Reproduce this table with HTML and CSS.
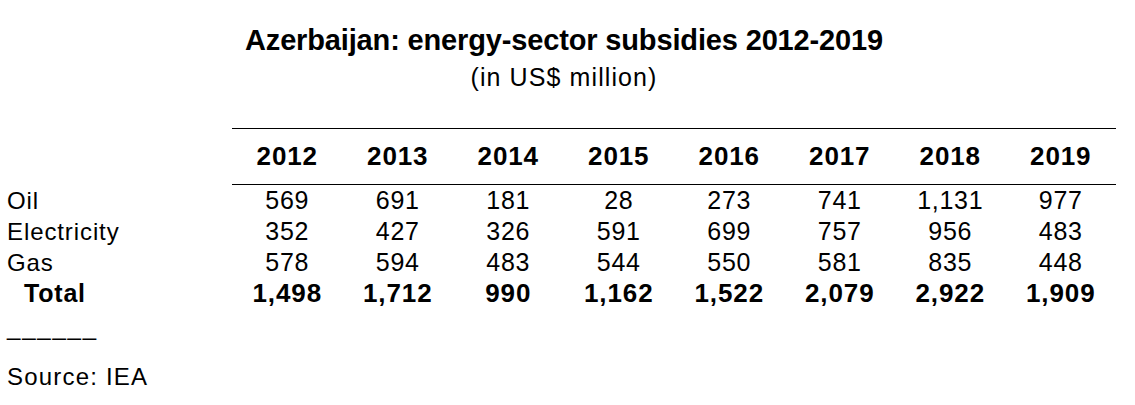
FILE: index.html
```html
<!DOCTYPE html>
<html lang="en">
<head>
<meta charset="utf-8">
<title>Azerbaijan: energy-sector subsidies 2012-2019</title>
<link rel="stylesheet" href="styles.css">
</head>
<body>
<div class="page">
  <h1 class="title">Azerbaijan: energy-sector subsidies 2012-2019</h1>
  <p class="subtitle">(in US$ million)</p>
  <table class="data">
    <colgroup>
      <col class="col-label">
      <col class="col-year"><col class="col-year"><col class="col-year"><col class="col-year">
      <col class="col-year"><col class="col-year"><col class="col-year"><col class="col-year">
    </colgroup>
    <thead>
      <tr class="head-row">
        <th class="blank"></th>
        <th>2012</th><th>2013</th><th>2014</th><th>2015</th>
        <th>2016</th><th>2017</th><th>2018</th><th>2019</th>
      </tr>
    </thead>
    <tbody>
      <tr>
        <td class="label">Oil</td>
        <td>569</td><td>691</td><td>181</td><td>28</td>
        <td>273</td><td>741</td><td>1,131</td><td>977</td>
      </tr>
      <tr>
        <td class="label">Electricity</td>
        <td>352</td><td>427</td><td>326</td><td>591</td>
        <td>699</td><td>757</td><td>956</td><td>483</td>
      </tr>
      <tr>
        <td class="label">Gas</td>
        <td>578</td><td>594</td><td>483</td><td>544</td>
        <td>550</td><td>581</td><td>835</td><td>448</td>
      </tr>
      <tr class="total">
        <td class="label">Total</td>
        <td>1,498</td><td>1,712</td><td>990</td><td>1,162</td>
        <td>1,522</td><td>2,079</td><td>2,922</td><td>1,909</td>
      </tr>
    </tbody>
  </table>
  <p class="rule">______</p>
  <p class="source">Source: IEA</p>
</div>
</body>
</html>
```
FILE: styles.css
```css
html, body {
  margin: 0;
  padding: 0;
  background: #ffffff;
}

body {
  font-family: "Liberation Sans", Arial, sans-serif;
  color: #000000;
}

.page {
  width: 1128px;
  padding: 23px 0 0 7px;
  box-sizing: border-box;
}

.title {
  margin: 0;
  width: 1114px;
  text-align: center;
  font-size: 29px;
  line-height: 34px;
  font-weight: 700;
  letter-spacing: -0.15px;
}

.subtitle {
  margin: 6px 0 0 0;
  width: 1114px;
  text-align: center;
  font-size: 25px;
  line-height: 28px;
  letter-spacing: 1.1px;
}

.data {
  margin-top: 37px;
  border-collapse: collapse;
  table-layout: fixed;
  width: 1109px;
  font-size: 25px;
  letter-spacing: 0.7px;
}

.col-label {
  width: 225px;
}

.col-year {
  width: 110.5px;
}

.data th,
.data td {
  padding: 0;
  text-align: center;
  white-space: nowrap;
}

.head-row th {
  height: 55px;
  font-weight: 700;
  font-size: 26px;
  letter-spacing: 0.9px;
  border-top: 1px solid #000000;
  border-bottom: 1px solid #000000;
}

.head-row th.blank {
  border: none;
}

.data tbody td {
  height: 31px;
  line-height: 31px;
}

.data td.label {
  text-align: left;
  font-size: 24px;
  letter-spacing: 0.9px;
}

.total td {
  font-weight: 700;
  font-size: 26px;
  letter-spacing: 0.9px;
}

.data .total td.label {
  padding-left: 17px;
  font-size: 25px;
  letter-spacing: 0.8px;
}

.rule {
  margin: 4px 0 0 0;
  font-size: 24px;
  line-height: 28px;
  letter-spacing: 1.8px;
}

.source {
  margin: 22px 0 0 0;
  font-size: 24px;
  line-height: 28px;
  letter-spacing: 1.2px;
}
```
